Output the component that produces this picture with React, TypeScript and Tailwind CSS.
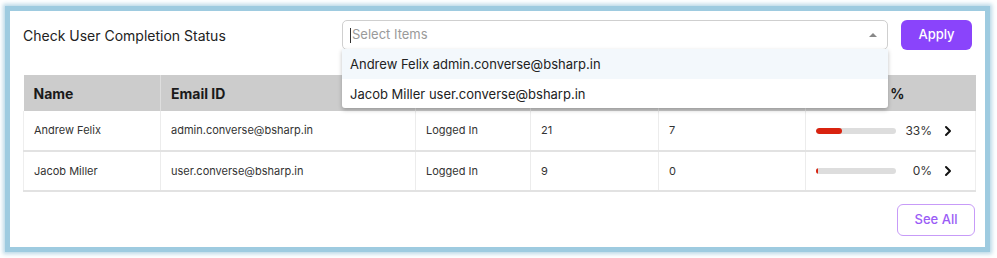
import { FC } from "react";

const rows = [
  { name: "Andrew Felix", email: "admin.converse@bsharp.in", status: "Logged In", total: 21, done: 7, pct: 33 },
  { name: "Jacob Miller", email: "user.converse@bsharp.in", status: "Logged In", total: 9, done: 0, pct: 0 },
];

const Chevron: FC = () => (
  <svg width="8" height="12" viewBox="0 0 8 12" className="ml-[12px]">
    <path d="M2 2l4 4-4 4" fill="none" stroke="#111" strokeWidth="2" strokeLinecap="round" strokeLinejoin="round" />
  </svg>
);

const App: FC = () => {
  return (
    <div className="w-[997px] h-[258px] bg-white pt-[6px] pl-[5px]" style={{ fontFamily: "Inter, 'Noto Sans', sans-serif" }}>
      <div className="w-[985px] h-[246px] border-[5px] border-[#9ecbe0] shadow-[0_0_4px_2px_rgba(140,190,215,0.6)] bg-white pl-[13px] pr-[10px] pt-[9px]">
        <div className="flex items-center h-[30px]">
          <h2 className="w-[319px] text-[14px] text-[#222]">Check User Completion Status</h2>
          <div className="relative w-[546px]">
            <div className="flex items-center h-[30px] border border-[#cfcfcf] rounded-[5px] pl-[7px] pr-[10px]">
              <span className="w-px h-[15px] bg-[#333]" />
              <span className="text-[13px] text-[#9a9a9a] ml-px flex-1">Select Items</span>
              <span className="w-0 h-0 border-x-[4px] border-x-transparent border-b-[4px] border-b-[#888]" />
            </div>
            <div className="absolute left-0 right-0 top-[29px] z-10 bg-white shadow-[0_2px_4px_rgba(0,0,0,0.25)] rounded-b-[3px] text-[13px] text-[#222]">
              <div className="h-[30px] flex items-center px-[8px] pt-[2px] bg-[#f3f8fc]">Andrew Felix admin.converse@bsharp.in</div>
              <div className="h-[29px] flex items-center px-[8px] pt-[2px]">Jacob Miller user.converse@bsharp.in</div>
            </div>
          </div>
          <button className="ml-[13px] w-[71px] h-[30px] rounded-[6px] bg-[#8a44fb] text-white text-[13px] font-medium">Apply</button>
        </div>

        <table className="mt-[25px] w-[952px] border-collapse table-fixed text-[#333]">
          <colgroup>
            <col className="w-[137px]" />
            <col className="w-[255px]" />
            <col className="w-[115px]" />
            <col className="w-[128px]" />
            <col className="w-[147px]" />
            <col className="w-[170px]" />
          </colgroup>
          <thead>
            <tr className="h-[36px] bg-[#cccccc] text-[14px] font-semibold text-[#1a1a1a] text-left">
              <th className="pl-[10px] border-r border-[#dedede]">Name</th>
              <th className="pl-[10px] border-r border-[#dedede]">Email ID</th>
              <th className="pl-[10px] border-r border-[#dedede]">Status</th>
              <th className="pl-[10px] border-r border-[#dedede]">Total</th>
              <th className="pl-[10px] border-r border-[#dedede]">Completed</th>
              <th className="pl-[2px]">Completion %</th>
            </tr>
          </thead>
          <tbody>
            {rows.map((r) => (
              <tr key={r.name} className="h-[40px] text-[11px] border-b-[2px] border-[#e2e2e2] border-x border-x-[#eeeeee]">
                <td className="pl-[10px] border-r border-[#ececec]">{r.name}</td>
                <td className="pl-[10px] border-r border-[#ececec]">{r.email}</td>
                <td className="pl-[10px] border-r border-[#ececec]">{r.status}</td>
                <td className="pl-[10px] border-r border-[#ececec]">{r.total}</td>
                <td className="pl-[10px] border-r border-[#ececec]">{r.done}</td>
                <td className="pl-[10px]">
                  <div className="flex items-center">
                    <div className="w-[80px] h-[6px] rounded-full bg-[#dddddd] overflow-hidden">
                      <div className="h-full rounded-full bg-[#d9230f]" style={{ width: `${Math.max(r.pct, 2)}%` }} />
                    </div>
                    <span className="w-[36px] text-right text-[12px] text-[#333]">{r.pct}%</span>
                    <Chevron />
                  </div>
                </td>
              </tr>
            ))}
          </tbody>
        </table>

        <div className="flex justify-end mt-[12px]">
          <button className="w-[78px] h-[32px] rounded-[6px] border border-[#c79bf8] text-[#9a5cf6] text-[13px] font-medium">See All</button>
        </div>
      </div>
    </div>
  );
};

export default App;
